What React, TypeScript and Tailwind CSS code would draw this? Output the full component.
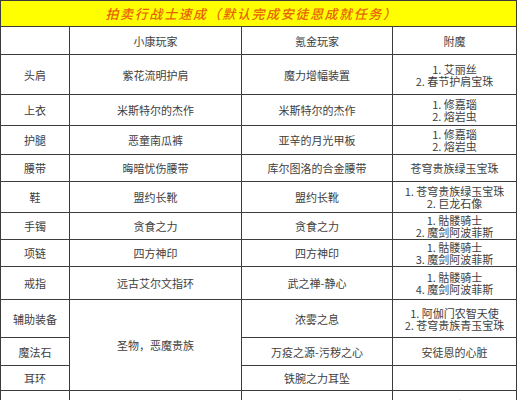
import React from "react";

type Row = { h: number; a: string; b?: string; c: string[]; d: string[] };

const rows: Row[] = [
  { h: 40, a: "头肩", b: "紫花流明护肩", c: ["魔力增幅装置"], d: ["1. 艾丽丝", "2. 春节护肩宝珠"] },
  { h: 31, a: "上衣", b: "米斯特尔的杰作", c: ["米斯特尔的杰作"], d: ["1. 修嘉瑙", "2. 熔岩虫"] },
  { h: 29, a: "护腿", b: "恶童南瓜裤", c: ["亚辛的月光甲板"], d: ["1. 修嘉瑙", "2. 熔岩虫"] },
  { h: 27, a: "腰带", b: "晦暗忧伤腰带", c: ["库尔图洛的合金腰带"], d: ["苍穹贵族绿玉宝珠"] },
  { h: 31, a: "鞋", b: "盟约长靴", c: ["盟约长靴"], d: ["1. 苍穹贵族绿玉宝珠", "2. 巨龙石像"] },
  { h: 27, a: "手镯", b: "贪食之力", c: ["贪食之力"], d: ["1. 骷髅骑士", "2. 魔剑阿波菲斯"] },
  { h: 27, a: "项链", b: "四方神印", c: ["四方神印"], d: ["1. 骷髅骑士", "3. 魔剑阿波菲斯"] },
  { h: 33, a: "戒指", b: "远古艾尔文指环", c: ["武之禅-静心"], d: ["1. 骷髅骑士", "4. 魔剑阿波菲斯"] },
  { h: 38, a: "辅助装备", c: ["浓雾之息"], d: ["1. 阿伽门农智天使", "2. 苍穹贵族青玉宝珠"] },
  { h: 28, a: "魔法石", c: ["万疫之源-污秽之心"], d: ["安徒恩的心脏"] },
  { h: 25, a: "耳环", c: ["铁腕之力耳坠"], d: [] },
  { h: 40, a: "", b: "", c: ["王鼎战士之刃（护符）"], d: ["1. 修嘉瑙", "2. 熔岩虫"] },
];

const cell = "border border-[#3c3c3c] text-center align-middle p-0 leading-[12px]";

function Lines({ l }: { l: string[] }) {
  return (
    <>
      {l.map((t, i) => (
        <div key={i}>{t}</div>
      ))}
    </>
  );
}

export default function App() {
  return (
    <div className="w-[517px] h-[400px] overflow-hidden bg-white">
      <table
        className="table-fixed border-collapse w-[516px] text-[11px] text-[#3e3e3e]"
        style={{ fontFamily: '"Noto Sans CJK SC", "Noto Sans", sans-serif' }}
      >
        <colgroup>
          <col className="w-[69px]" />
          <col className="w-[172px]" />
          <col className="w-[151px]" />
          <col className="w-[124px]" />
        </colgroup>
        <tbody>
          <tr className="h-[26px]">
            <td
              colSpan={4}
              className="border border-[#3c3c3c] bg-[#ffff00] text-center align-middle p-0 text-[13px] font-medium italic tracking-[1.6px] text-[#e8620a] pr-[14px]"
              style={{ fontFamily: '"Noto Sans CJK SC", sans-serif' }}
            >
              拍卖行战士速成（默认完成安徒恩成就任务）
            </td>
          </tr>
          <tr className="h-[28px]">
            <td className={cell}></td>
            <td className={cell}>小康玩家</td>
            <td className={cell}>氪金玩家</td>
            <td className={cell}>附魔</td>
          </tr>
          {rows.map((r, i) => (
            <tr key={i} style={{ height: r.h }}>
              <td className={cell}>{r.a}</td>
              {r.b !== undefined ? (
                <td className={cell}>{r.b}</td>
              ) : i === 8 ? (
                <td className={cell} rowSpan={3}>
                  圣物，恶魔贵族
                </td>
              ) : null}
              <td className={cell}>
                <Lines l={r.c} />
              </td>
              <td className={cell}>
                <Lines l={r.d} />
              </td>
            </tr>
          ))}
        </tbody>
      </table>
    </div>
  );
}
